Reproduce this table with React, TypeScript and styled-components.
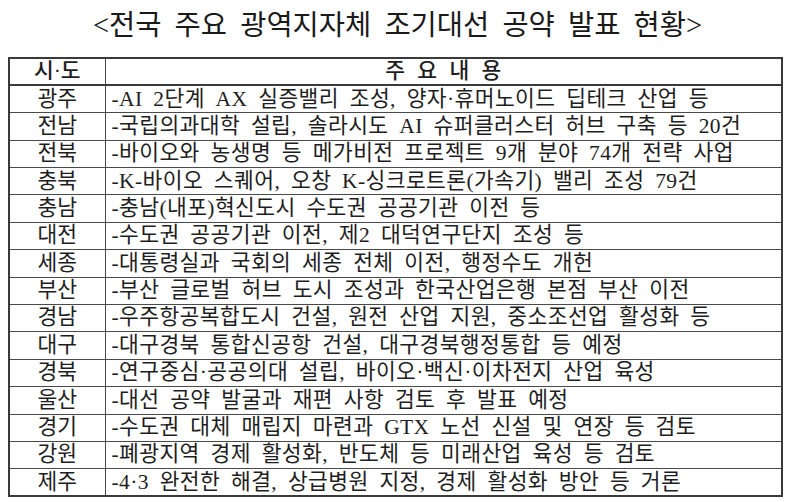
import styled, { createGlobalStyle } from 'styled-components';

const GlobalStyle = createGlobalStyle`
  html, body {
    margin: 0;
    padding: 0;
    background: #ffffff;
  }
  body {
    font-family: 'Liberation Serif', 'Noto Sans CJK KR', serif;
    color: #1e1e1e;
  }
`;

const rows: [string, string][] = [
  ['광주', '-AI 2단계 AX 실증밸리 조성, 양자·휴머노이드 딥테크 산업 등'],
  ['전남', '-국립의과대학 설립, 솔라시도 AI 슈퍼클러스터 허브 구축 등 20건'],
  ['전북', '-바이오와 농생명 등 메가비전 프로젝트 9개 분야 74개 전략 사업'],
  ['충북', '-K-바이오 스퀘어, 오창 K-싱크로트론(가속기) 밸리 조성 79건'],
  ['충남', '-충남(내포)혁신도시 수도권 공공기관 이전 등'],
  ['대전', '-수도권 공공기관 이전, 제2 대덕연구단지 조성 등'],
  ['세종', '-대통령실과 국회의 세종 전체 이전, 행정수도 개헌'],
  ['부산', '-부산 글로벌 허브 도시 조성과 한국산업은행 본점 부산 이전'],
  ['경남', '-우주항공복합도시 건설, 원전 산업 지원, 중소조선업 활성화 등'],
  ['대구', '-대구경북 통합신공항 건설, 대구경북행정통합 등 예정'],
  ['경북', '-연구중심·공공의대 설립, 바이오·백신·이차전지 산업 육성'],
  ['울산', '-대선 공약 발굴과 재편 사항 검토 후 발표 예정'],
  ['경기', '-수도권 대체 매립지 마련과 GTX 노선 신설 및 연장 등 검토'],
  ['강원', '-폐광지역 경제 활성화, 반도체 등 미래산업 육성 등 검토'],
  ['제주', '-4·3 완전한 해결, 상급병원 지정, 경제 활성화 방안 등 거론'],
];

const App = () => {
  return (
    <Page>
      <GlobalStyle />
      <Title>&lt;전국 주요 광역지자체 조기대선 공약 발표 현황&gt;</Title>
      <Table>
        <colgroup>
          <col style={{ width: '96px' }} />
          <col />
        </colgroup>
        <thead>
          <tr>
            <HeadCell>시·도</HeadCell>
            <HeadCell $spaced>주 요 내 용</HeadCell>
          </tr>
        </thead>
        <tbody>
          {rows.map(([region, text]) => (
            <tr key={region}>
              <RegionCell>{region}</RegionCell>
              <ContentCell>{text}</ContentCell>
            </tr>
          ))}
        </tbody>
      </Table>
    </Page>
  );
};

export default App;

const Page = styled.div`
  width: 789px;
  height: 502px;
  padding: 8px 6px 0 8px;
  box-sizing: border-box;
`;

const Title = styled.h1`
  margin: 0 0 13px;
  text-align: center;
  font-family: 'Liberation Serif', 'Noto Sans CJK KR', serif;
  font-weight: 400;
  font-size: 28.5px;
  line-height: 36px;
  color: #1a1a1a;
  word-spacing: 6px;
  padding-left: 4px;
`;

const Table = styled.table`
  width: 775px;
  border-collapse: collapse;
  table-layout: fixed;
  border: 2px solid #3a3a3a;

  tr {
    height: 27.4px;
  }
`;

const Cell = styled.td`
  padding: 0;
  border: 1.5px solid #4a4a4a;
  font-size: 21.5px;
  font-weight: 400;
  line-height: 1;
  white-space: nowrap;
  overflow: hidden;
  vertical-align: middle;
`;

const HeadCell = styled(Cell).attrs({ as: 'th' })<{ $spaced?: boolean }>`
  font-weight: 500;
  text-align: center;
  border-bottom: 2px solid #3a3a3a;
  word-spacing: ${(p) => (p.$spaced ? '7px' : '0')};
`;

const RegionCell = styled(Cell)`
  text-align: center;
`;

const ContentCell = styled(Cell)`
  text-align: left;
  padding-left: 6px;
  letter-spacing: 0.4px;
  word-spacing: 5px;
`;
